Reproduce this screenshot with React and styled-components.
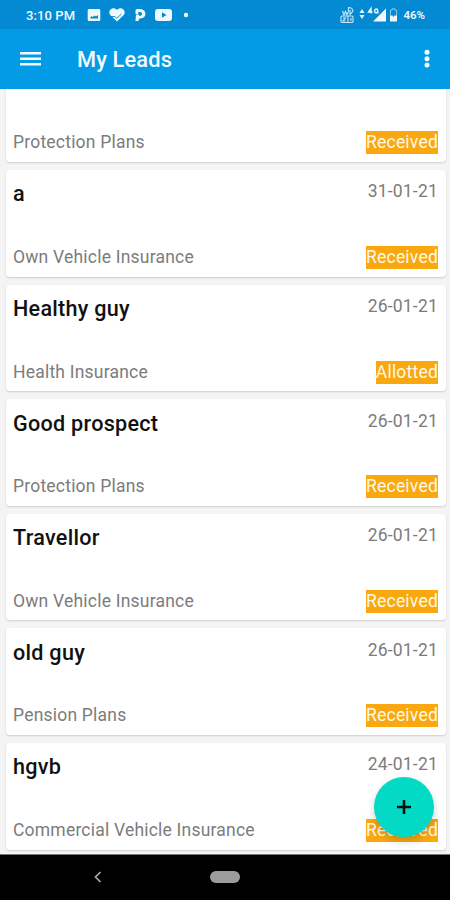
import React from 'react'
import styled, { createGlobalStyle } from 'styled-components'

const GlobalStyle = createGlobalStyle`
  * {
    box-sizing: border-box;
  }
  body {
    margin: 0;
    font-family: Roboto, "Liberation Sans", sans-serif;
    background: #f4f4f4;
  }
  svg {
    display: block;
  }
`

const Screen = styled.div`
  position: relative;
  display: flex;
  flex-direction: column;
  width: 450px;
  height: 900px;
  overflow: hidden;
  background: #f4f4f4;
`

const StatusBar = styled.div`
  display: flex;
  align-items: center;
  justify-content: space-between;
  flex: none;
  height: 29px;
  padding: 1px 25px 0 26px;
  background: #038ad3;
  color: #eef8fe;
`

const StatusGroup = styled.div`
  display: flex;
  align-items: center;
`

const Clock = styled.span`
  width: 61px;
  font-size: 13px;
  font-weight: 500;
  letter-spacing: 0.1px;
  white-space: nowrap;
`

const Battery = styled.span`
  margin-left: 5px;
  font-size: 11.5px;
  font-weight: 600;
  line-height: 14px;
`

const AppBar = styled.header`
  display: flex;
  align-items: center;
  flex: none;
  height: 59.5px;
  padding: 0 20px;
  background: #039be6;
  color: #f3fbff;
`

const Title = styled.h1`
  flex: 1;
  margin: 2px 0 0 36px;
  font-size: 21.8px;
  font-weight: 500;
  letter-spacing: 0.15px;
`

const List = styled.main`
  display: flex;
  flex-direction: column;
  justify-content: flex-end;
  flex: 1;
  min-height: 0;
  gap: 8.1px;
  padding: 0 4px 4px 6px;
  overflow: hidden;
`

const Card = styled.article`
  display: flex;
  flex-direction: column;
  justify-content: space-between;
  flex: none;
  height: 106.5px;
  padding: 10.4px 8px 7.5px 7px;
  border-radius: 4px;
  background: #fff;
  box-shadow: 0 1px 2px rgba(0, 0, 0, 0.16);
`

const Row = styled.div`
  display: flex;
  align-items: flex-start;
  justify-content: space-between;
  min-height: 23px;
`

const Name = styled.h2`
  margin: 0;
  color: #111;
  font-size: 21.6px;
  font-weight: 500;
  line-height: 28px;
  letter-spacing: 0.27px;
`

const Muted = styled.span`
  color: #7c7c7c;
  font-size: 17.5px;
  line-height: 23px;
  letter-spacing: 0.21px;
`

const Status = styled.span`
  background: #faa80f;
  color: #fff8e8;
  font-size: 17.5px;
  line-height: 23px;
  letter-spacing: 0.21px;
`

const AddButton = styled.button`
  position: absolute;
  right: 16.5px;
  bottom: 63px;
  display: flex;
  align-items: center;
  justify-content: center;
  width: 60px;
  height: 60px;
  padding: 0;
  border: 0;
  border-radius: 50%;
  background: #03dac5;
  box-shadow: 0 5px 8px rgba(0, 0, 0, 0.14), 0 1px 6px rgba(0, 0, 0, 0.06);
`

const NavBar = styled.nav`
  display: grid;
  grid-template-columns: 195px 60px 195px;
  align-items: center;
  justify-items: center;
  flex: none;
  height: 46.5px;
  border-top: 1px solid #777;
  background: #000;
`

const HomePill = styled.div`
  width: 30px;
  height: 12px;
  border-radius: 6px;
  background: #9c9c9c;
`

// the first lead is scrolled half under the app bar, only its lower row shows
const leads = [
  { plan: 'Protection Plans', status: 'Received' },
  { name: 'a', date: '31-01-21', plan: 'Own Vehicle Insurance', status: 'Received' },
  { name: 'Healthy guy', date: '26-01-21', plan: 'Health Insurance', status: 'Allotted' },
  { name: 'Good prospect', date: '26-01-21', plan: 'Protection Plans', status: 'Received' },
  { name: 'Travellor', date: '26-01-21', plan: 'Own Vehicle Insurance', status: 'Received' },
  { name: 'old guy', date: '26-01-21', plan: 'Pension Plans', status: 'Received' },
  { name: 'hgvb', date: '24-01-21', plan: 'Commercial Vehicle Insurance', status: 'Received' },
]

const NotificationIcons = () => (
  <svg width="104" height="16" viewBox="0 0 104 16" fill="currentColor">
    <path
      fillRule="evenodd"
      d="M2 2h10a1.300 1.300 0 0 1 1.300 1.300v9.400A1.300 1.300 0 0 1 12 14H2a1.300 1.300 0 0 1-1.300-1.300V3.300A1.300 1.300 0 0 1 2 2zM3 11.500h8V8L9 9.500 7.500 8.500 5.800 10 4.500 9z"
    />
    <path d="M30 14.500l-6.500-6.300C19.500 4 26 -1.500 30 3c4-4.500 10.500 1 6.500 5.200z" />
    <path d="M24 9.500h3.500l2.300 1.700 4.500-4" fill="none" stroke="#038ad3" strokeWidth=".9" />
    <path
      fillRule="evenodd"
      d="M50 2h3c7.200 0 7.200 9.500.5 9.500h-1.300L51.500 14H48.500L49 7.500h3v1.300h1c2.800 0 2.800-3.800 0-3.800h-1.500L51 7H48.500V3.500Q48.500 2 50 2z"
    />
    <path
      fillRule="evenodd"
      d="M71 2h11q3 0 3 3v6q0 3-3 3H71q-3 0-3-3V5q0-3 3-3zm4 3.300v5.400L79.500 8z"
    />
    <circle cx="99" cy="8" r="2.200" />
  </svg>
)

const SignalIcons = () => (
  <svg width="58" height="18" viewBox="0 0 58 18" fill="currentColor">
    <g fill="none" stroke="currentColor" strokeWidth="1.100" opacity=".85">
      <path d="M2.500 5l1.500 4 1.500-3.500L7 9l1.500-4M8.500 5V1.500q4 0 4.500 3.500l-3 3.500V4" />
      <rect x="1" y="10" width="12" height="6.500" rx="1" />
      <path d="M3 12h2.500L3 15h2.500M8 10v6M11 12v3" />
    </g>
    <path d="M22 3L24.500 7h-5zM22 13L24.500 9h-5z" />
    <path d="M33 15.500h13V2.500z" />
    <path
      d="M31 7.500V2.500L28.500 6h4M38 3.300H35.500q-1.800 1.500 0 3.500h2.300V5h-1"
      fill="none"
      stroke="currentColor"
      strokeWidth="1.400"
    />
    <path d="M50.500 9.500V4h1.800V2.800h2.500V4h1.700v5.500" fill="none" stroke="currentColor" opacity=".55" />
    <path d="M50 9.500h2.500l1 1.500 1-1.500h2.500V15.500h-7z" />
  </svg>
)

const MenuIcon = () => (
  <svg width="21" height="16" viewBox="0 0 21 16" fill="currentColor">
    <path d="M0 1h21v2.500H0zM0 6.500h21V9H0zM0 12h21v2.500H0z" />
  </svg>
)

const MoreIcon = () => (
  <svg width="6" height="20" viewBox="0 0 6 20" fill="currentColor">
    <circle cx="3" cy="3.300" r="2.500" />
    <circle cx="3" cy="9.700" r="2.500" />
    <circle cx="3" cy="16.100" r="2.500" />
  </svg>
)

const PlusIcon = () => (
  <svg width="14" height="14" viewBox="0 0 14 14" stroke="#08100f" strokeWidth="2.600">
    <path d="M7 0v14M0 7h14" />
  </svg>
)

const BackIcon = () => (
  <svg width="8" height="12" viewBox="0 0 8 12" fill="none" stroke="#aaa" strokeWidth="1.700">
    <path d="M6.500 1L1.500 6l5 5" />
  </svg>
)

const LeadCard = ({ lead }) => (
  <Card>
    <Row>
      {lead.name && <Name>{lead.name}</Name>}
      {lead.date && <Muted>{lead.date}</Muted>}
    </Row>
    <Row>
      <Muted>{lead.plan}</Muted>
      <Status>{lead.status}</Status>
    </Row>
  </Card>
)

const App = () => (
  <Screen>
    <GlobalStyle />
    <StatusBar>
      <StatusGroup>
        <Clock>3:10 PM</Clock>
        <NotificationIcons />
      </StatusGroup>
      <StatusGroup>
        <SignalIcons />
        <Battery>46%</Battery>
      </StatusGroup>
    </StatusBar>
    <AppBar>
      <MenuIcon />
      <Title>My Leads</Title>
      <MoreIcon />
    </AppBar>
    <List>
      {leads.map((lead, i) => (
        <LeadCard key={i} lead={lead} />
      ))}
    </List>
    <NavBar>
      <BackIcon />
      <HomePill />
    </NavBar>
    <AddButton aria-label="Add lead">
      <PlusIcon />
    </AddButton>
  </Screen>
)

export default App
